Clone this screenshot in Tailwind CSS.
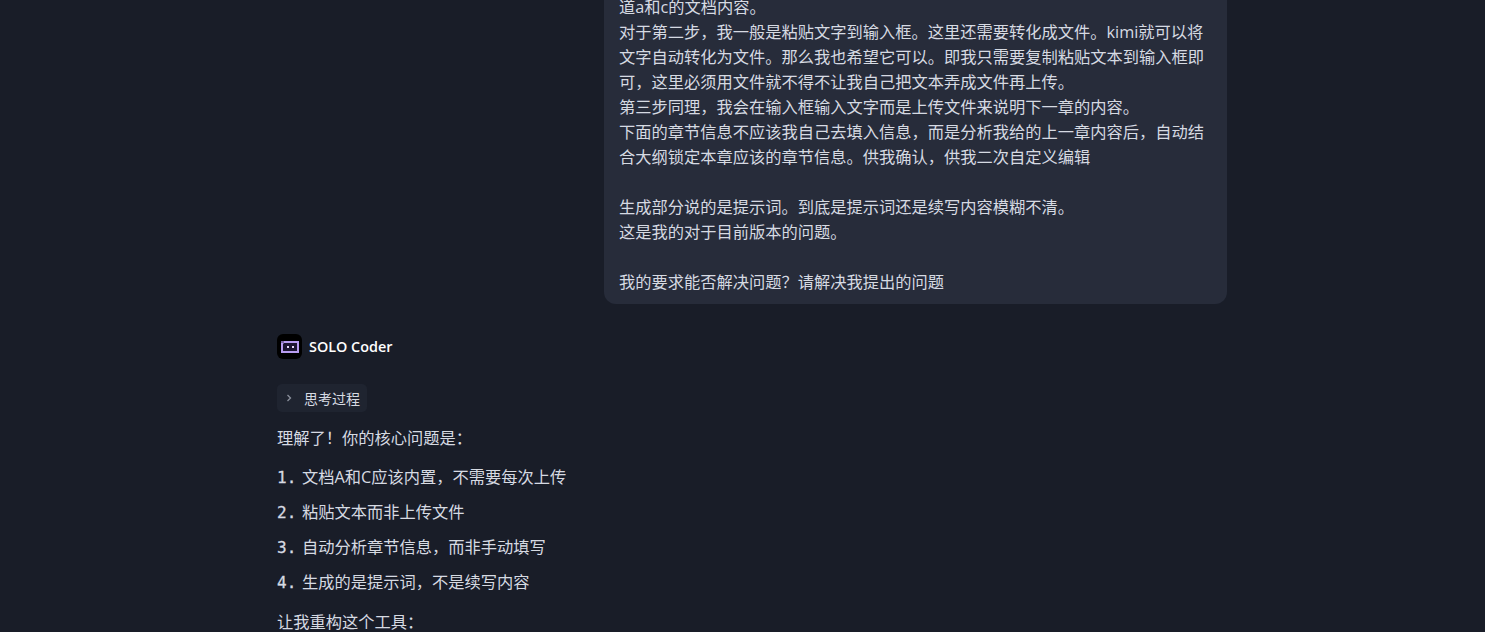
<!DOCTYPE html>
<html lang="zh-CN">
<head>
    <meta charset="UTF-8">
    <title>SOLO Coder</title>
    <script src="https://cdn.jsdelivr.net/npm/@tailwindcss/browser@4"></script>
</head>
<body class="bg-[#191d28] h-screen overflow-hidden font-['Open_Sans','Noto_Sans_CJK_SC',sans-serif] text-[16.25px] leading-[25px] text-[#d6dae2]">
    <div class="w-[950px] ml-[277px] -mt-[16px]">
        <!-- user message -->
        <div class="flex justify-end">
            <div class="w-[623px] bg-[#272c3a] rounded-[12px] px-[15px] pt-[11px] pb-[9px]">
                <p>
                    道a和c的文档内容。<br>
                    对于第二步，我一般是粘贴文字到输入框。这里还需要转化成文件。kimi就可以将<br>
                    文字自动转化为文件。那么我也希望它可以。即我只需要复制粘贴文本到输入框即<br>
                    可，这里必须用文件就不得不让我自己把文本弄成文件再上传。<br>
                    第三步同理，我会在输入框输入文字而是上传文件来说明下一章的内容。<br>
                    下面的章节信息不应该我自己去填入信息，而是分析我给的上一章内容后，自动结<br>
                    合大纲锁定本章应该的章节信息。供我确认，供我二次自定义编辑<br>
                    <br>
                    生成部分说的是提示词。到底是提示词还是续写内容模糊不清。<br>
                    这是我的对于目前版本的问题。<br>
                    <br>
                    我的要求能否解决问题？请解决我提出的问题
                </p>
            </div>
        </div>

        <!-- agent header -->
        <div class="flex items-center h-[25px] gap-[7px] mt-[30px]">
            <div class="w-[25px] h-[25px] bg-black rounded-[6px] flex items-center justify-center">
                <svg width="18" height="12" viewBox="0 0 18 12" fill="none">
                    <path d="M0 0h18v12H0z" fill="#b79cf0"/>
                    <path d="M0 0h3v2H0z" fill="#7d68a8"/>
                    <path d="M3 2h13v8H2V3z" fill="#1c1530"/>
                    <rect x="6" y="5" width="2" height="2" fill="#e3d8fa"/>
                    <rect x="11" y="5" width="2" height="2" fill="#e3d8fa"/>
                </svg>
            </div>
            <span class="text-[14.4px] leading-[25px] font-semibold text-white">SOLO Coder</span>
        </div>

        <!-- thinking toggle -->
        <div class="inline-flex items-center h-[28px] mt-[25px] w-[90px] bg-[#1f2430] rounded-[5px] pl-[8px] gap-[11px] text-[14px] text-[#d6dae2]">
            <svg width="8" height="10" viewBox="0 0 8 10" fill="none">
                <path d="M2.5 2l3 3-3 3" stroke="#8b909c" stroke-width="1.3"/>
            </svg>
            <span>思考过程</span>
        </div>

        <p class="mt-[14px]">理解了！你的核心问题是：</p>

        <ol class="mt-[14px] flex flex-col gap-[10px]">
            <li class="flex"><span class="w-[25px] font-['DejaVu_Sans_Mono',monospace] text-[16px] [-webkit-text-stroke:0.3px]">1.</span>文档A和C应该内置，不需要每次上传</li>
            <li class="flex"><span class="w-[25px] font-['DejaVu_Sans_Mono',monospace] text-[16px] [-webkit-text-stroke:0.3px]">2.</span>粘贴文本而非上传文件</li>
            <li class="flex"><span class="w-[25px] font-['DejaVu_Sans_Mono',monospace] text-[16px] [-webkit-text-stroke:0.3px]">3.</span>自动分析章节信息，而非手动填写</li>
            <li class="flex"><span class="w-[25px] font-['DejaVu_Sans_Mono',monospace] text-[16px] [-webkit-text-stroke:0.3px]">4.</span>生成的是提示词，不是续写内容</li>
        </ol>

        <p class="mt-[15px]">让我重构这个工具：</p>
    </div>
</body>
</html>
